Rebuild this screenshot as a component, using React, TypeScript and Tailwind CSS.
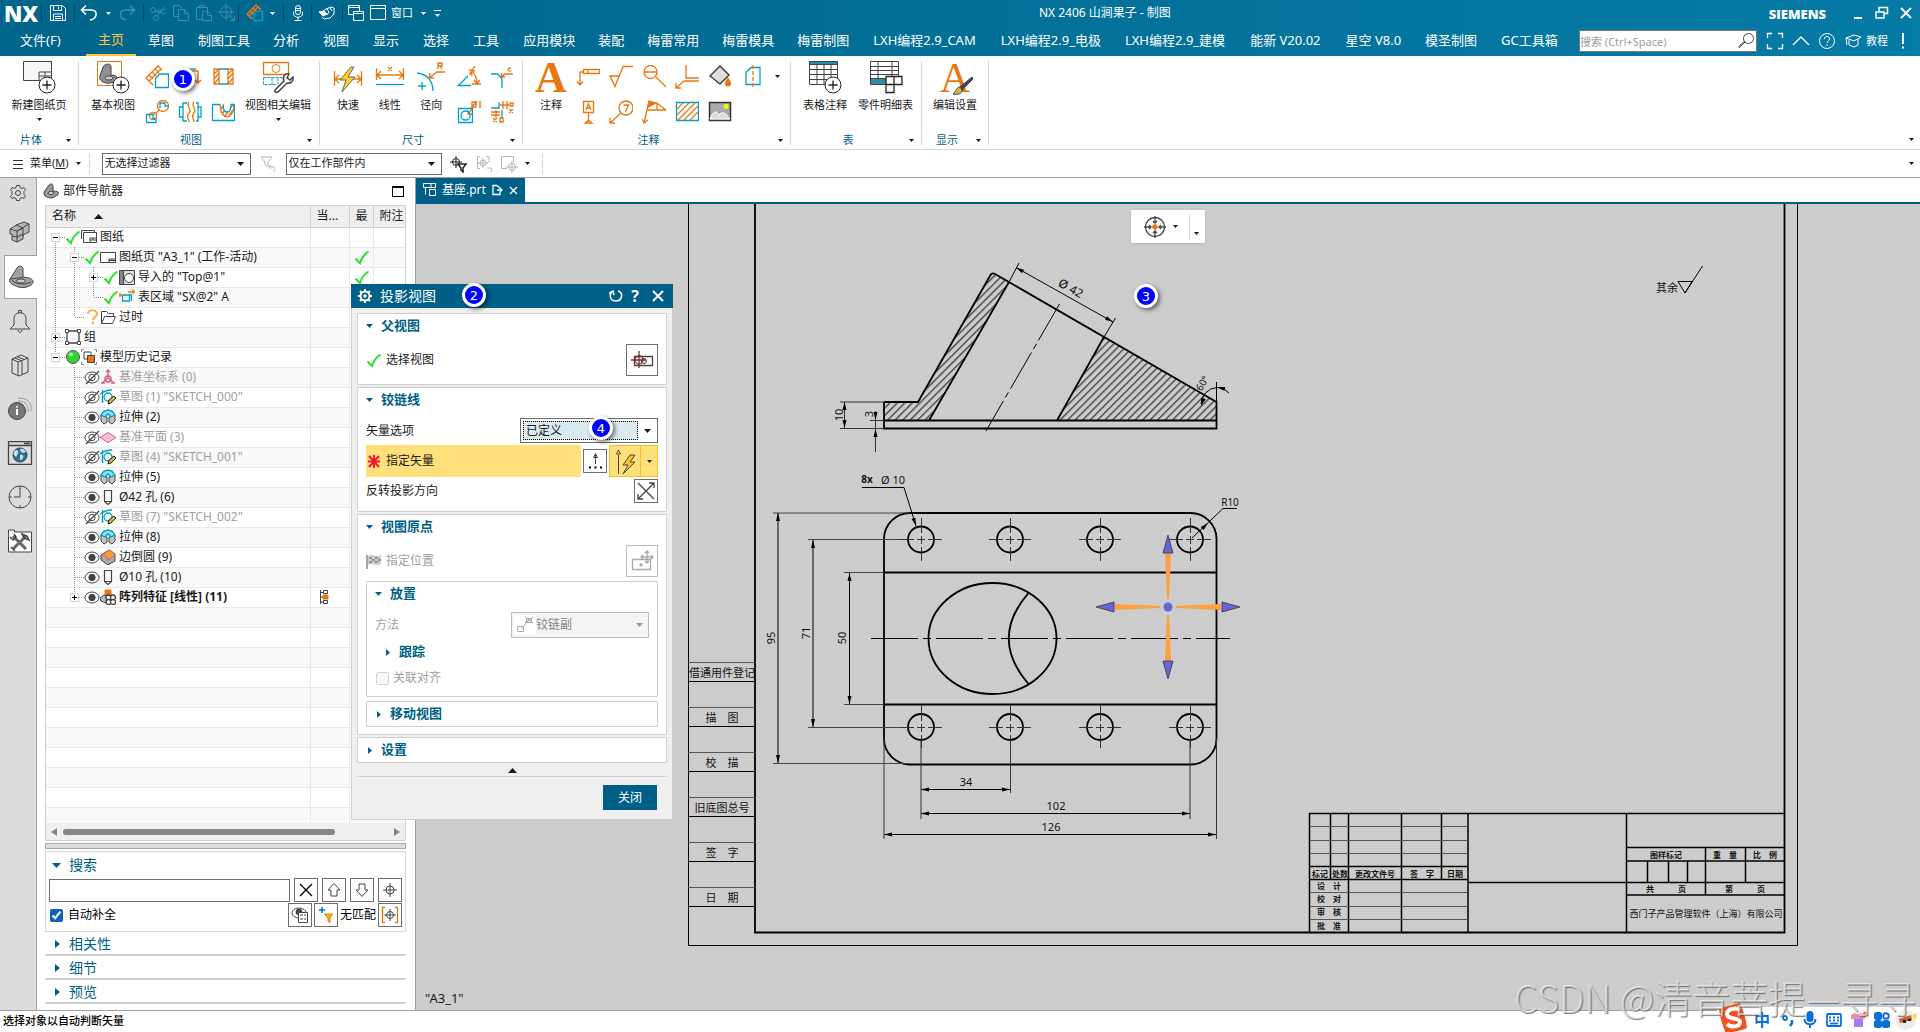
import React from 'react';
import type { ReactNode } from 'react';

const O = '#e8770f';
const C = '#00a0c8';
const K = '#444444';

type SvgProps = { w?: number; h?: number; className?: string; children: ReactNode; sw?: number; color?: string };

function Svg({ w = 24, h, className = '', children, sw = 1, color = K }: SvgProps) {
  const hh = h ?? w;
  return (
    <svg
      width={w}
      height={hh}
      viewBox={`0 0 ${w} ${hh}`}
      fill="none"
      stroke={color}
      strokeWidth={sw}
      className={`shrink-0 ${className}`}
      aria-hidden="true"
    >
      {children}
    </svg>
  );
}

function Caret({ color = '#1a1a1a', className = '' }: { color?: string; className?: string }) {
  return (
    <svg width="5" height="3" viewBox="0 0 5 3" className={`shrink-0 ${className}`} aria-hidden="true">
      <path d="M0 0h5L2.5 3z" fill={color} />
    </svg>
  );
}

function Check({ className = '' }: { className?: string }) {
  return (
    <Svg w={16} sw={2} color="#2be02b" className={className}>
      <path d="M1.5 9.5L6 14C7.5 9 10.5 5 14.5 2.5" />
    </Svg>
  );
}

function Marker({ n, className }: { n: number; className: string }) {
  return (
    <span
      className={`absolute z-30 flex h-6 w-6 items-center justify-center rounded-full border-[3px] border-white bg-[#0000ff] text-[13px] leading-none text-white shadow-[2px_2px_4px_rgba(0,0,0,0.55)] font-["DejaVu_Sans"] ${className}`}
    >
      {n}
    </span>
  );
}

/* ---------- Title bar and menu ---------- */

function BarSep() {
  return <span className="h-[18px] w-px shrink-0 bg-[#004a68]" />;
}

function QuickButton({ label, children, dim = false, className = 'w-[23px]' }: { label: string; children: ReactNode; dim?: boolean; className?: string }) {
  return (
    <button type="button" aria-label={label} className={`flex h-6 shrink-0 items-center justify-center ${dim ? 'opacity-25' : ''} ${className}`}>
      {children}
    </button>
  );
}

function TitleBar() {
  return (
    <div className="flex h-[26px] items-center">
      <span className="w-[41px] shrink-0 pl-1 font-['Open_Sans'] text-[22px] font-extrabold leading-[26px] text-white">NX</span>
      <BarSep />
      <QuickButton label="保存" className="w-8">
        <Svg w={18} color="#fff">
          <path d="M1.5 1.5h12l3 3v12h-15zM4.5 1.5v5h8v-5M4.5 16v-6h9v6M6 12.5h6M6 14.5h6M9.5 2.5v3" />
        </Svg>
      </QuickButton>
      <BarSep />
      <QuickButton label="撤销" className="w-7">
        <Svg w={18} color="#fff" sw={1.5}>
          <path d="M6 1.5L1.5 6 6 10.5M1.5 6H12c6 1 5.5 8.5-2 10" />
        </Svg>
      </QuickButton>
      <Caret color="#fff" className="ml-[3px]" />
      <QuickButton label="重做" dim className="w-8">
        <Svg w={18} color="#fff" sw={1.5}>
          <path d="M12 1.5L16.5 6 12 10.5M16.5 6H7C.5 7 1 14.5 8 16" />
        </Svg>
      </QuickButton>
      <BarSep />
      <QuickButton label="剪切" dim className="ml-[2px] w-[23px]">
        <Svg w={18} color="#fff">
          <circle cx="4" cy="6" r="2.5" />
          <circle cx="7" cy="14" r="2.5" />
          <path d="M6 7l11 3M8 12l7-9M6 8l11-3" />
        </Svg>
      </QuickButton>
      <QuickButton label="复制" dim>
        <Svg w={18} color="#fff">
          <path d="M6.5 5.5h6l4 4v7h-10zM12.5 5.5v4h4M6 12.5H1.5v-11h6l3 3" />
        </Svg>
      </QuickButton>
      <QuickButton label="粘贴" dim>
        <Svg w={18} color="#fff">
          <path d="M7 15.5H1.5v-12h11V7M4.5 3.5v-2h5v2M7.5 7.5h5l4 4v5h-9zM12.5 7.5v4h4" />
        </Svg>
      </QuickButton>
      <QuickButton label="定位" dim>
        <Svg w={18} color="#fff">
          <circle cx="8" cy="8" r="5.5" />
          <path d="M8 0v16M0 8h16M9.5 9.5l7 7M16.5 12v4.5H12" />
        </Svg>
      </QuickButton>
      <BarSep />
      <QuickButton label="投影视图" className="w-[31px]">
        <Svg w={18} color={O} sw={1.5}>
          <path d="M1 10L10 1l5 5M1 10l5 5M4 7l4 4M7 4l4 4M3 12L12 3" />
          <path d="M7.5 16.5V10.5L11 7.5h5.5v9z" stroke={C} fill="#00658b" />
        </Svg>
      </QuickButton>
      <Caret color="#fff" />
      <span className="w-2" />
      <BarSep />
      <QuickButton label="语音" className="w-[27px]">
        <Svg w={18} color="#fff">
          <rect x="6.5" y="1.5" width="5" height="9" rx="2.5" />
          <path d="M4.5 7.5v2c0 5 9 5 9 0v-2M9 13v3M5.5 16.5h7M7 4.5h4M7 6.5h4" />
        </Svg>
      </QuickButton>
      <BarSep />
      <QuickButton label="触控" className="w-[30px]">
        <Svg w={18} color="#fff">
          <path d="M4 8l4-3 5-2 3 1v6l-4 4-6 1-2-2M9 5l2 3-2 3M12 4l2 3" />
          <path d="M1 8l5-1 3 3-4 2z" fill="#fff" />
        </Svg>
      </QuickButton>
      <BarSep />
      <QuickButton label="切换窗口" className="w-[26px]">
        <Svg w={18} color="#fff">
          <path d="M1.5 1.5h11v9h-11zM1.5 3.5h11" />
          <path d="M6.5 7.5h10v9h-10zM6.5 9.5h10" fill="#00658b" />
        </Svg>
      </QuickButton>
      <button type="button" className="flex shrink-0 items-center gap-1 text-[11px] text-white">
        <Svg w={18} color="#fff">
          <path d="M1.5 1.5h15v14h-15zM1.5 4.5h15" />
        </Svg>
        窗口
        <Caret color="#fff" className="ml-1" />
      </button>
      <button type="button" aria-label="自定义" className="ml-2 flex flex-col items-center gap-[3px]">
        <span className="h-px w-[7px] bg-white" />
        <Caret color="#fff" />
      </button>
      <h1 className="flex-1 text-center text-xs text-white">NX 2406 山涧果子 - 制图</h1>
      <span className="mt-1 font-['Open_Sans'] text-[13px] font-extrabold text-white">SIEMENS</span>
      <div className="ml-[24px] flex items-center gap-[8px] pr-[6px] text-white">
        <button type="button" aria-label="最小化">
          <Svg w={16} color="#fff" sw={2}><path d="M4 13h8" /></Svg>
        </button>
        <button type="button" aria-label="还原">
          <Svg w={16} color="#fff" sw={1.5}><path d="M5 6V2.5h8.5v6H10M2 7h8v6H2z" /></Svg>
        </button>
        <button type="button" aria-label="关闭窗口">
          <Svg w={16} color="#fff" sw={1.8}><path d="M3 3l10 10M13 3L3 13" /></Svg>
        </button>
      </div>
    </div>
  );
}

const PAIR = 'px-3';
const QUAD = 'pl-3 pr-[11px]';
const MIXED = 'px-[13px]';
const MENUS: [string, string][] = [
  ['草图', PAIR],
  ['制图工具', QUAD],
  ['分析', PAIR],
  ['视图', PAIR],
  ['显示', PAIR],
  ['选择', PAIR],
  ['工具', PAIR],
  ['应用模块', QUAD],
  ['装配', QUAD],
  ['梅雷常用', QUAD],
  ['梅雷模具', QUAD],
  ['梅雷制图', QUAD],
  ['LXH编程2.9_CAM', MIXED],
  ['LXH编程2.9_电极', PAIR],
  ['LXH编程2.9_建模', PAIR],
  ['能新 V20.02', MIXED],
  ['星空 V8.0', PAIR],
  ['模圣制图', PAIR],
  ['GC工具箱', PAIR],
];

function MenuBar() {
  return (
    <div className="flex h-[30px] items-center text-[13px] text-white">
      <nav className="flex h-full items-center whitespace-nowrap">
        <button type="button" className="w-[86px] pl-5 text-left">文件(F)</button>
        <button type="button" className="flex h-full items-center border-b-2 border-[#ffc53d] px-3 text-[#ffc53d]">主页</button>
        {MENUS.map(([m, pad]) => (
          <button type="button" key={m} className={pad}>{m}</button>
        ))}
      </nav>
      <div className="ml-auto flex h-[22px] w-[178px] shrink-0 items-center border border-[#777] bg-white">
        <input aria-label="搜索" placeholder="搜索 (Ctrl+Space)" className="h-full w-full bg-white text-[11px] text-black outline-none placeholder:text-[#a0a0a0]" />
        <Svg w={18} className="mr-px">
          <circle cx="11.5" cy="6.5" r="5" />
          <path d="M8 10l-6 6M7.5 9l-6 6" />
        </Svg>
      </div>
      <div className="flex shrink-0 items-center gap-2 pl-[9px] pr-[10px]">
        <button type="button" aria-label="全屏">
          <Svg w={18} color="#fff" sw={1.3}><path d="M1.5 6V1.5H6M12 1.5h4.5V6M16.5 12v4.5H12M6 16.5H1.5V12" /></Svg>
        </button>
        <button type="button" aria-label="折叠功能区">
          <Svg w={18} color="#fff" sw={1.3}><path d="M1 13l8-8 8 8" /></Svg>
        </button>
        <button type="button" aria-label="帮助">
          <Svg w={18} color="#fff">
            <circle cx="9" cy="9" r="7.500" />
            <path d="M6.500 7c0-3.500 5-3.500 5 0 0 2-2.500 2-2.500 4M9 12.500v1.500" />
          </Svg>
        </button>
        <button type="button" className="flex items-center gap-1 text-[11px]">
          <Svg w={18} color="#fff">
            <path d="M2 6l8-3 7 2-7 4zM5 8v5l5 2 4-2V7M2 6l1 7" />
          </Svg>
          教程
        </button>
        <button type="button" aria-label="提醒" className="ml-1 mr-1">
          <Svg w={6} h={18} color="#fff" sw={2}><path d="M3 1v11M3 14.500v2" /></Svg>
        </button>
      </div>
    </div>
  );
}

/* ---------- Ribbon ---------- */

function Group({ label, width, children }: { label: string; width: string; children: ReactNode }) {
  return (
    <section aria-label={label} className={`flex shrink-0 ${width}`}>
      <div className="flex min-w-0 flex-1 flex-col">
        <div className="flex flex-1 justify-between px-2">{children}</div>
        <div className="flex h-[18px] items-center pr-[7px] text-[11px] text-[#005f87]">
          <span className="flex-1 pr-1 text-center">{label}</span>
          <Caret />
        </div>
      </div>
      <span className="mb-1 w-px bg-[#d8d8d8]" />
    </section>
  );
}

function Big({ label, caret = false, children }: { label: string; caret?: boolean; children: ReactNode }) {
  return (
    <button type="button" className="flex flex-col items-center whitespace-nowrap text-[11px] leading-[14px] text-[#1a1a1a]">
      <span className="mb-[3px] flex h-[34px] items-center">{children}</span>
      {label}
      {caret && <Caret className="mt-[6px]" />}
    </button>
  );
}

function SmallGrid({ cols, items }: { cols: string; items: [string, ReactNode][] }) {
  return (
    <div className={`grid content-start gap-x-[9px] gap-y-[11px] pt-1 ${cols}`}>
      {items.map(([name, el]) => (
        <button type="button" key={name} aria-label={name}>{el}</button>
      ))}
    </div>
  );
}

const Plus = ({ x, y }: { x: number; y: number }) => (
  <>
    <circle cx={x} cy={y} r="8" fill="#fff" stroke="#222" />
    <path d={`M${x - 4.5} ${y}h9M${x} ${y - 4.5}v9`} stroke="#222" strokeWidth="1.3" />
  </>
);

const VIEW_ICONS: [string, ReactNode][] = [
  ['投影', <Svg color={O} sw={1.3}><path d="M1 13L13 1l4 4M1 13l7 7M4 16L16 4M4 10l4 4M7 7l4 4M10 4l4 4" /><path d="M10.5 22.500v-9l4-4.500h9v13.500z" stroke={C} fill="#fff" /></Svg>],
  ['局部放大', <Svg color={O} sw={1.3}><path d="M12 6h8v12M17 15l3 3 3-3" /><path d="M12 4h6" stroke={C} /></Svg>],
  ['剖视图', <Svg color={O} sw={1.3}><path d="M3 4h5v15H3zM17 4h5v15h-5zM3 9l5-5M3 14l5-6M3 19l5-6M17 9l5-5M17 14l5-6M17 19l5-6" /><path d="M8 4h9M8 19h9" stroke={C} /></Svg>],
  ['局部', <Svg color={O} sw={1.3}><circle cx="18" cy="6" r="5.5" /><circle cx="8" cy="16" r="3.5" /><path d="M10.5 13.5l4-4" /><path d="M15 8V3h5v3h3M9.5 14.5H1.5v8h9.5v-4h-3v-3" stroke={C} /></Svg>],
  ['断开', <Svg color={O} sw={1.3}><path d="M11 2c-4 4 4 7 0 11s1 7 0 9M16 2c-4 4 4 7 0 11s1 7 0 9" /><path d="M9 3H5v18h4M5 7H1.5v10H5M18 3h2v18h-2M20 7h3v10h-3" stroke={C} /></Svg>],
  ['局部剖', <Svg color={O} sw={1.3}><path d="M9 4c0 17 14 17 14 1M9 10l4-5M11 14l3-4M14 16l3-4M18 15l4-5M19 8l4-4" /><path d="M9 4.5H1.5v16h22v-16H20c0 10-8 10-8 0" stroke={C} /></Svg>],
];

const DIM_ICONS: [string, ReactNode][] = [
  ['角度', <Svg color={O} sw={1.3}><path d="M18 1l-6 9M14 6c5 3 6 8 6 13M12 5l6 1M14 6l1 5M17 15l3 4 3-4M15 19h9" /><path d="M11 11L1.5 20.5H14" stroke={C} /></Svg>],
  ['倒斜角', <Svg color={O} sw={1.3}><path d="M23 9h-8l-4 3M12 8l-1 4h4M21 3c-4-1-4 4 0 3" /><path d="M1 9h7l4 5v9" stroke={C} /></Svg>],
  ['孔', <Svg color={O} sw={1.3}><path d="M16 8l-5 6M11 10v4h4M15 2h4v5h-4zM14 8l6-7M22 2h3M22 7h3M23 2v5" /><path d="M1.500 8.500h14v14h-14z" stroke={C} /><circle cx="8.500" cy="15.500" r="4.500" stroke={C} /></Svg>],
  ['坐标', <Svg color={O} sw={1.3}><path d="M13 1v8M17 1v8M10 5h9M1 12h9M1 15h9M6 10v8M20 3h3v3h-3zM19 9l4 4M23 9l-4 4M3 18l4 4M7 18l-4 4M10 18h3v4h-3z" /><path d="M1 8h8V2M12 10v8" stroke={C} /></Svg>],
];

const NOTE_ICONS: [string, ReactNode][] = [
  ['特征控制框', <Svg color={O} sw={1.3}><path d="M4 7v13M1 16.5L4 20l3-3.5M4 7h4M7.5 4.500h16v4h-16zM12 4.500v4" /></Svg>],
  ['表面粗糙度', <Svg color={O} sw={1.3}><path d="M1 11h9L6 21.500zM6 21.500L14 1.500h10" /></Svg>],
  ['目标点', <Svg color={O} sw={1.3}><circle cx="8.500" cy="7" r="6.500" /><path d="M2 7h13M14 12l10 10" /></Svg>],
  ['相交', <Svg color={O} sw={1.3}><path d="M11 0v13h13M9 16h15M9 16l-8 7M1 18v5h5" /></Svg>],
  ['填充', <Svg color={K}><path d="M2 11L12 1l9 9-9 9z" fill="#ddd" strokeWidth="1.500" /><path d="M8 5l4-4 3 3" /><path d="M20 13c-4 6-3 8 0 8s4-2 0-8z" fill={O} stroke={O} /></Svg>],
  ['中心线', <Svg color={C} sw={1.3}><path d="M5 19.500V7.500l5-5h9v17z" /><path d="M12 0v23" stroke={O} strokeDasharray="4 2" /></Svg>],
  ['基准', <Svg color={O} sw={1.3}><path d="M7.500 1.500h10v11h-10zM12.500 13v9M9 23h7l-3.500-3z" /><path d="M10 10l2.500-6 2.500 6M11 8h3" /></Svg>],
  ['符号标注', <Svg color={O} sw={1.3}><circle cx="17" cy="8" r="7" /><path d="M12 13L1 23M1 18v5h5M14.500 5h5l-3 7" /></Svg>],
  ['焊接符号', <Svg color={O} sw={1.3}><path d="M5 10L2 23M0 19l2 4 4-3M5 10h19L15 3v7M5 10L7 1" /><path d="M7 1l7 2-8 4z" fill={O} /></Svg>],
  ['剖面线', <Svg color={O} sw={1.3}><path d="M2 9l6-6M2 15L14 3M3 20L20 3M9 20L23 6M15 20l8-8" /><path d="M1.500 2.500h22v18h-22z" stroke={C} /></Svg>],
  ['图像', <Svg color="#333"><path d="M1.500 2.500h21v18h-21z" fill="#a9a9a9" strokeWidth="1.500" /><circle cx="18" cy="6.500" r="2.500" fill="#ff0" stroke="none" /><path d="M2 19c3-8 6-9 9-4 3-4 6-3 11 4z" fill="#ddd" stroke="#fff" /></Svg>],
];

function Ribbon() {
  return (
    <div className="flex h-[94px] border-b border-[#d8d8d8] bg-white pt-[5px]">
      <Group label="片体" width="w-[79px]">
        <div className="flex w-full justify-center">
          <Big label="新建图纸页" caret>
            <Svg w={34}><path d="M1.5.5h28v19h-28z" fill="#f6f6f6" /><path d="M17 19v-8h12M17 15h12M23 11v4" /><Plus x={25} y={24} /></Svg>
          </Big>
        </div>
      </Group>
      <Group label="视图" width="w-[241px]">
        <div className="flex w-full justify-between pl-1">
          <Big label="基本视图">
            <Svg w={34}><path d="M1.5.5h24v24h-24z" stroke={O} /><path d="M4 15l3-9c2-4 9-4 8 1v7c9 0 8 7-1 8-6 1-12-3-10-7z" fill="#8f8f8f" /><ellipse cx="13" cy="17" rx="4" ry="2" fill="#ccc" /><Plus x={25} y={24} /></Svg>
          </Big>
          <SmallGrid cols="grid-cols-3" items={VIEW_ICONS} />
          <Big label="视图相关编辑" caret>
            <Svg w={34}><path d="M2.5 1.5h25v12h-25z" stroke={O} strokeWidth="1.300" /><circle cx="15" cy="7.5" r="4" stroke={O} /><path d="M2.5 16.5h25M2.5 16.5v7h14M11 17v6M17 17v6" stroke={C} strokeDasharray="3 1" /><path d="M14 29l9-9c-2-4 1-8 5-7l-2 4 3 2 3-3c1 4-3 7-6 6l-9 9c-3 1-4-1-3-2z" fill="#fff" strokeWidth="1.500" /></Svg>
          </Big>
        </div>
      </Group>
      <Group label="尺寸" width="w-[203px]">
        <div className="flex w-full justify-between pl-1">
          <Big label="快速"><Svg w={32} color={O}><path d="M2.5 9v15M29.5 9v15M3 17h26M7 13l-4 4 4 4M25 13l4 4-4 4" strokeWidth="1.300" /><path d="M19 5L8 18h6l-4 12 13-15h-7l6-10z" fill="#ffcf25" stroke="#666" /></Svg></Big>
          <Big label="线性"><Svg w={32} color={O} sw={1.3}><path d="M2.5 6v12M29.5 6v12M3 13h26M7 9l-4 4 4 4M25 9l4 4-4 4M14 5l4 4M18 5l-4 4" /><path d="M2 22.5h28" stroke={C} /></Svg></Big>
          <Big label="径向"><Svg w={32} color={O} sw={1.3}><path d="M30 10h-8l-8 6M15 11l-1 5h5M23 7V1h4v3h-4M25 4l2 3" /><path d="M2 11c10 1 16 8 16 18M3 24h8M7 20v8" stroke={C} /></Svg></Big>
          <SmallGrid cols="grid-cols-2" items={DIM_ICONS} />
        </div>
      </Group>
      <Group label="注释" width="w-[268px]">
        <div className="flex w-full justify-between pl-1 pr-[2px]">
          <Big label="注释">
            <span className="font-['Liberation_Serif'] text-[44px] font-bold leading-9 text-[#e8770f]">A</span>
          </Big>
          <SmallGrid cols="grid-cols-6" items={NOTE_ICONS} />
          <Caret className="mt-[14px]" />
        </div>
      </Group>
      <Group label="表" width="w-[131px]">
        <div className="flex w-full justify-between pl-1">
          <Big label="表格注释">
            <Svg w={34}><path d="M1.5.5h28v23h-28zM1.5 8.500h28M1.5 13.500h28M1.5 18.500h28M9 4v19M16 4v19M23 4v19" /><path d="M1.500.5h28v3h-28z" fill="#2a8bab" /><Plus x={25} y={24} /></Svg>
          </Big>
          <Big label="零件明细表">
            <Svg w={34}><path d="M1.5.5h28v23h-28zM1.5 5.500h28M1.5 9.500h28M1.5 13.500h28M9 0v17M23 0v16" /><path d="M1.5 17.500h18v6h-18z" fill="#2a8bab" /><path d="M17 15.500h16v8H17zM17 23.500h8v8h-8zM25 15v8" fill="#fff" stroke="#222" strokeWidth="1.300" /></Svg>
          </Big>
        </div>
      </Group>
      <Group label="显示" width="w-[67px]">
        <div className="flex w-full justify-center">
          <Big label="编辑设置">
            <span className="relative font-['Liberation_Serif'] text-[42px] leading-9 text-[#e8770f]">
              A
              <Svg w={22} className="absolute bottom-0 left-3"><path d="M20 3L8 13l2 3L21 5z" fill="#444" /><path d="M8 13c-4 0-3 4-7 7 5 1 9 0 9-4z" fill="#d9b340" /></Svg>
            </span>
          </Big>
        </div>
      </Group>
      <button type="button" aria-label="功能区选项" className="ml-auto self-end pb-[8px] pr-[6px]"><Caret /></button>
    </div>
  );
}

function BoxSelect({ label, value, className, selectClass }: { label: string; value: string; className: string; selectClass: string }) {
  return (
    <span className={`relative flex items-center border border-[#6e6e6e] bg-white ${className}`}>
      <select aria-label={label} defaultValue={value} className={`h-full appearance-none outline-none ${selectClass}`}>
        <option>{value}</option>
      </select>
      <svg width="7" height="4" viewBox="0 0 7 4" className="pointer-events-none absolute right-[6px]" aria-hidden="true">
        <path d="M0 0h7L3.500 4z" fill="currentColor" />
      </svg>
    </span>
  );
}

function SelectionBar() {
  return (
    <div className="flex h-[28px] items-center border-b border-[#a0a0a0] bg-white text-[11px] text-[#1a1a1a]">
      <button type="button" className="flex items-center pl-3">
        <Svg w={12} className="mr-[6px]" color="#333"><path d="M1 2.500h10M1 6.500h10M1 10.500h10" /></Svg>
        菜单(<u>M</u>)
        <Caret className="ml-[7px]" />
      </button>
      <span className="ml-[8px] h-5 w-px bg-[#d8d8d8]" />
      <BoxSelect label="选择过滤器" value="无选择过滤器" className="ml-3 h-[22px] w-[149px]" selectClass="w-full pl-[2px] bg-transparent" />
      <Svg w={18} className="ml-2" color="#b5b5b5"><path d="M2 2h11l-4 5v5l-3-2V7zM11 12h4c2 2 1 4-1 4M12 10l-2 2 2 2" /></Svg>
      <BoxSelect label="选择范围" value="仅在工作部件内" className="ml-[9px] h-[22px] w-[156px]" selectClass="w-full pl-[2px] bg-transparent" />
      <Svg w={18} className="ml-2" color="#222"><circle cx="6" cy="7" r="3.500" /><path d="M6 1v12M0 7h12" /><path d="M8 9h8l-3 4v4l-2-2v-2z" fill="#fff" strokeWidth="1.500" /></Svg>
      <Svg w={18} className="ml-2" color="#b5b5b5"><path d="M4 1.500H1.500v12H4M10 1.500h3v6" /><circle cx="7" cy="8" r="3" /><path d="M7 3v10M2 8h10M11 13h4c1 1 1 3 0 4" /></Svg>
      <Svg w={18} className="ml-[6px]" color="#b5b5b5"><path d="M7 13.500H1.500v-12h12V7" /><circle cx="12" cy="12" r="3.500" /><path d="M12 6v12M6 12h12" /></Svg>
      <Caret className="ml-[7px]" />
      <span className="ml-3 h-5 w-px bg-[#d8d8d8]" />
      <button type="button" aria-label="选择条选项" className="ml-auto pr-[6px]"><Caret /></button>
    </div>
  );
}

/* ---------- Resource strip ---------- */

const STRIP: [string, ReactNode][] = [
  ['设置', <Svg w={18} className="mb-1 mr-1"><circle cx="9" cy="9" r="2.500" /><path d="M7.500 1.500h3l.5 2 2 1 2-1 1.500 2-1.500 2v3l1.500 2-1.500 2-2-1-2 1-.5 2h-3l-.5-2-2-1-2 1-1.500-2 1.500-2v-3l-1.500-2 1.500-2 2 1 2-1z" /></Svg>],
  ['装配导航器', <Svg w={22} h={24}><path d="M1 8l5-3 1-1 8-3 5 2v8l-6 3v4l-6 3-5-2v-6H1z" fill="#b5b5b5" /><path d="M1 8l7 2 12-7M8 10v11M3 15l5 1 6-3M14 7v8M7 4l7 3M8 10l6-3" /></Svg>],
  ['部件导航器', <Svg w={26} h={24}><path d="M2 14L9 3c2-3 6-2 6 1v8c11 1 12 5 8 8-6 4-13 3-19-1-2-1-3-3-2-5z" fill="#a2a2a2" /><path d="M2 14c2 0 9-1 13-2M4 15c4 5 14 5 19 2" /><ellipse cx="13" cy="16" rx="4.500" ry="2" fill="#ccc" /></Svg>],
  ['通知', <Svg w={22} h={24}><path d="M9.500 4V1.500h3V4M5 16V9c0-7 12-7 12 0v7l4 4H1zM9 21c0 3 4 3 4 0" /></Svg>],
  ['重用库', <Svg w={20} h={24}><path d="M2 6l9-4 7 3v14l-9 4-7-3zM2 6l6 3v14M8 9l10-4M5 5l7 3v13M8 4l6 2.500" /></Svg>],
  ['HD3D', <Svg w={26} h={24}><circle cx="10" cy="14" r="8.500" fill="#777" /><path d="M11 4c8 0 11 5 10 11M11 1c11 0 14 6 13 13" stroke="#999" /><path d="M10 12v6M10 9v1.500" stroke="#fff" strokeWidth="2" /></Svg>],
  ['浏览器', <Svg w={26} h={24}><path d="M1.500.5h23v23h-23zM1.500 4.500h23M17 2.500h6" strokeWidth="1.300" /><circle cx="13" cy="14" r="7" fill="#2d7390" stroke="#245" /><path d="M7 11c2-4 5-1 4 1s-1 5-3 3c-1-1-2-2-1-4zM13 8c3-1 5 1 6 3l-3 1c-2-1-3-2-3-4zM13 14c3-1 4 1 3 3s-3 3-3 1z" fill="#cde" stroke="none" /></Svg>],
  ['历史记录', <Svg w={24}><circle cx="12" cy="12" r="11" /><path d="M12 3v9H6M12 20v3M1 12h3M20 12h3M12 1v3" /></Svg>],
  ['角色', <Svg w={26} h={24}><path d="M1.500 3V1h6v2h17v20h-23z" fill="#fff" /><path d="M6 20L19 7M6 7l13 13" strokeWidth="3" stroke="#666" /><path d="M15 5l5 2 2 4-5-2zM3 8l3 3 3-3-2-3M4 18l4 4" strokeWidth="1.500" /></Svg>],
];

function ResourceStrip() {
  return (
    <nav aria-label="资源条" className="flex w-[37px] shrink-0 flex-col items-end border-r border-[#a0a0a0] bg-[#dcdcdc]">
      {STRIP.map(([name, el], i) => (
        <button
          type="button"
          key={name}
          aria-label={name}
          className={`flex w-[33px] items-center justify-center ${i === 0 ? 'h-[33px]' : 'h-[44px]'} ${i === 2 ? 'relative left-px border border-r-0 border-[#a0a0a0] bg-white' : ''}`}
        >
          {el}
        </button>
      ))}
    </nav>
  );
}

/* ---------- Part navigator ---------- */

type Kind = 'sheets' | 'sheet' | 'view' | 'region' | 'folder' | 'group' | 'history' | 'csys' | 'sketch' | 'extrude' | 'hole' | 'plane' | 'blend' | 'pattern';
type Mark = 'check' | 'question' | 'ball' | 'eye' | 'hidden' | 'none';
type Row = { slots: string[]; mark: Mark; kind: Kind; text: string; dim?: boolean; bold?: boolean; latest?: boolean; flag?: boolean };

const ROWS: Row[] = [
  { slots: ['dh-'], mark: 'check', kind: 'sheets', text: '图纸' },
  { slots: ['ud', 'udh-'], mark: 'check', kind: 'sheet', text: '图纸页 "A3_1" (工作-活动)', latest: true },
  { slots: ['ud', 'ud', 'udh+'], mark: 'check', kind: 'view', text: '导入的 "Top@1"', latest: true },
  { slots: ['ud', 'ud', 'uh'], mark: 'check', kind: 'region', text: '表区域 "SX@2" A' },
  { slots: ['ud', 'uh'], mark: 'question', kind: 'folder', text: '过时' },
  { slots: ['udh+'], mark: 'none', kind: 'group', text: '组' },
  { slots: ['uh-'], mark: 'ball', kind: 'history', text: '模型历史记录' },
  { slots: ['', 'udh'], mark: 'hidden', kind: 'csys', text: '基准坐标系 (0)', dim: true },
  { slots: ['', 'udh'], mark: 'hidden', kind: 'sketch', text: '草图 (1) "SKETCH_000"', dim: true },
  { slots: ['', 'udh'], mark: 'eye', kind: 'extrude', text: '拉伸 (2)' },
  { slots: ['', 'udh'], mark: 'hidden', kind: 'plane', text: '基准平面 (3)', dim: true },
  { slots: ['', 'udh'], mark: 'hidden', kind: 'sketch', text: '草图 (4) "SKETCH_001"', dim: true },
  { slots: ['', 'udh'], mark: 'eye', kind: 'extrude', text: '拉伸 (5)' },
  { slots: ['', 'udh'], mark: 'eye', kind: 'hole', text: 'Ø42 孔 (6)' },
  { slots: ['', 'udh'], mark: 'hidden', kind: 'sketch', text: '草图 (7) "SKETCH_002"', dim: true },
  { slots: ['', 'udh'], mark: 'eye', kind: 'extrude', text: '拉伸 (8)' },
  { slots: ['', 'udh'], mark: 'eye', kind: 'blend', text: '边倒圆 (9)' },
  { slots: ['', 'udh'], mark: 'eye', kind: 'hole', text: 'Ø10 孔 (10)' },
  { slots: ['', 'uh+'], mark: 'eye', kind: 'pattern', text: '阵列特征 [线性] (11)', bold: true, flag: true },
];

function Slot({ s }: { s: string }) {
  return (
    <Svg w={19} h={20} color="#909090">
      {s.includes('u') && <path d="M9.500 0v10" strokeDasharray="1 1" />}
      {s.includes('d') && <path d="M9.500 10v10" strokeDasharray="1 1" />}
      {s.includes('h') && <path d="M10 10.500h9" strokeDasharray="1 1" />}
      {(s.includes('-') || s.includes('+')) && (
        <>
          <path d="M5.500 6.500h8v8h-8z" fill="#fff" stroke="#d0d0d0" />
          <path d="M7 10.500h5" stroke="#000" />
        </>
      )}
      {s.includes('+') && <path d="M9.500 8v5" stroke="#000" />}
    </Svg>
  );
}

function MarkIcon({ m }: { m: Mark }) {
  if (m === 'none') return null;
  if (m === 'check') return <Check />;
  if (m === 'question') return <Svg w={16} color="#ffab40" sw={2}><path d="M4 5c0-5 9-5 9 0 0 3-4 3-4 6M9 12.500v2.500" /></Svg>;
  if (m === 'ball') return <Svg w={16}><circle cx="8" cy="8" r="6.500" fill="#30d530" stroke="#555" /><circle cx="6" cy="5.500" r="2" fill="#a5f7a5" stroke="none" /></Svg>;
  return (
    <Svg w={16}>
      <ellipse cx="8" cy="8.500" rx="7" ry="5.500" />
      <circle cx="8" cy="8.500" r="3.200" fill={m === 'eye' ? K : 'none'} />
      {m === 'hidden' && <path d="M2 15L15 2" strokeWidth="1.300" />}
    </Svg>
  );
}

function KindIcon({ k }: { k: Kind }) {
  const art: Record<Kind, ReactNode> = {
    sheets: <><path d="M.5 10V1.500h13V3" /><path d="M2.500 3.500h13v10h-13zM9 13v-4h6M9 11h6M12 9v2" fill="#fff" /></>,
    sheet: <path d="M.5 3.500h15v10H.5zM9 13v-3h6M12 10v2M9 11.500h6" fill="#fff" />,
    view: <><path d="M.5 1.500h15v14H.5z" fill="#ddd" /><path d="M.5 1.500h4v14h-4z" fill="#888" /><circle cx="10" cy="9" r="4.500" fill="#fff" /></>,
    region: <g strokeWidth="1.300"><path d="M0 6h3M9 3h7M14 0v5M1 4v4" stroke={O} /><path d="M3.500 6v6h7V5M3.500 6h9v6" stroke={C} /></g>,
    folder: <path d="M1.500 14.500V2.500h5l2 2h5v3M1.500 14.500l3-7h11l-3 7z" />,
    group: <><path d="M2 2h12v12H2z" strokeWidth="1.300" /><path d="M.5.5h3v3h-3zM12.500.5h3v3h-3zM.5 12.500h3v3h-3zM12.500 12.500h3v3h-3z" fill="#fff" /></>,
    history: <><path d="M.5 3V.5H3M13 .5h2.500V3M15.500 13v2.500H13M3 15.500H.5V13" stroke="#888" /><path d="M3 3h7v7H3z" fill="#fff" /><path d="M6.500 6.500h7v7h-7z" fill={O} /></>,
    csys: <g stroke="#d4608c" strokeWidth="1.500"><path d="M8 1v8M8 9l-6 5M8 9l6 5M6 3l2-2 2 2" /><circle cx="8" cy="10" r="3" /><path d="M1 14h4M11 14h4" /></g>,
    sketch: <><path d="M2.500 1v13M0 5c4-3 7-4 12-4M3 13l-1-3" stroke={C} strokeWidth="1.300" /><circle cx="8" cy="8" r="4" stroke={C} strokeWidth="1.300" /><path d="M8 15l1-4 5-4 2 2-5 5z" fill="#d9b340" stroke="#222" /></>,
    extrude: <><path d="M1 6v6l3 3 3-2V8zM15 6v6l-3 3-3-2V8z" fill="#c4c4c4" /><path d="M1 6l3-4 4-1 4 1 3 4-4 2-3-3-3 3z" fill="#8edcf0" stroke={C} strokeWidth="1.300" /></>,
    hole: <path d="M4.500 1.500h7v11l-3.500 3-3.500-3zM4.500 12.500h7" strokeWidth="1.200" />,
    plane: <path d="M0 8.500l8-5 8 5-8 5z" fill="#f9bdd3" stroke="#d4608c" />,
    blend: <><path d="M1 6l8-5 6 4v7l-7 4-7-5z" fill="#aaa" /><path d="M1 6c4 0 6 2 7 5l7-5c-1-3-4-4-6-5z" fill="#f79a3c" stroke="#b65" /></>,
    pattern: <><path d="M5 1h6v6H5z" fill={O} stroke={O} /><path d="M0 9l4-3 5 2-3 6-5-2z" fill="#bbb" /><g strokeWidth="1.300" fill="#fff"><circle cx="8.500" cy="8.500" r="2.500" /><circle cx="13" cy="8.500" r="2.500" /><circle cx="8.500" cy="13" r="2.500" /><circle cx="13" cy="13" r="2.500" /></g></>,
  };
  return <Svg w={16}>{art[k]}</Svg>;
}

function TreeTable() {
  const blanks = Array.from({ length: 11 });
  const cell = 'border-r border-b border-[#e9e9e9] p-0';
  return (
    <table className="w-full table-fixed border-collapse text-xs text-[#1a1a1a]">
      <colgroup>
        <col />
        <col className="w-[39px]" />
        <col className="w-6" />
        <col className="w-8" />
      </colgroup>
      <thead>
        <tr className="h-[21px] bg-[#efefef] text-left">
          <th className="border-r border-b border-[#d0d0d0] p-0 pl-[6px] font-normal">
            <span className="flex items-center gap-[18px]">
              名称
              <svg width="9" height="5" viewBox="0 0 9 5" aria-hidden="true"><path d="M0 5h9L4.500 0z" fill="#1a1a1a" /></svg>
            </span>
          </th>
          <th className="border-r border-b border-[#d0d0d0] p-0 pl-[6px] font-normal">当...</th>
          <th className="border-r border-b border-[#d0d0d0] p-0 pl-[6px] font-normal">最</th>
          <th className="overflow-hidden whitespace-nowrap border-b border-[#d0d0d0] p-0 pl-[6px] font-normal">附注</th>
        </tr>
      </thead>
      <tbody>
        {ROWS.map((r) => (
          <tr key={r.text} className="h-5 even:bg-[#f9f9f9]">
            <td className={cell}>
              <div className={`-my-px flex h-5 items-center whitespace-nowrap ${r.dim ? 'text-[#a0a0a0]' : ''} ${r.bold ? 'font-bold' : ''}`}>
                {r.slots.map((s, i) => <Slot key={i} s={s} />)}
                <MarkIcon m={r.mark} />
                <KindIcon k={r.kind} />
                <span className="pl-[3px]">{r.text}</span>
              </div>
            </td>
            <td className={cell}>
              {r.flag && <Svg w={10} h={16} className="ml-2"><path d="M1.500 1v14M1.500 3.500h3M1.500 8h3M1.500 13h3M4.500 1.500h4v3h-4zM4.500 11.500h4v3h-4z" /><path d="M4 6h5v4H4z" fill={O} stroke={O} /></Svg>}
            </td>
            <td className={cell}>{r.latest && <Check className="ml-1" />}</td>
            <td className="border-b border-[#e9e9e9] p-0" />
          </tr>
        ))}
        {blanks.map((_, i) => (
          <tr key={i} className="h-5 even:bg-[#f9f9f9]">
            <td className={cell} /><td className={cell} /><td className={cell} /><td className="border-b border-[#e9e9e9] p-0" />
          </tr>
        ))}
      </tbody>
    </table>
  );
}

function ToolBtn({ label, children }: { label: string; children: ReactNode }) {
  return (
    <button type="button" aria-label={label} className="flex h-6 w-6 shrink-0 items-center justify-center border border-[#6e6e6e] bg-white">
      {children}
    </button>
  );
}

function Navigator() {
  return (
    <aside className="flex w-[379px] shrink-0 flex-col border-r border-[#a0a0a0] bg-white pl-2 pr-[9px]">
      <div className="flex h-[27px] items-center pb-px text-xs text-[#1a1a1a]">
        <Svg w={16} className="-ml-[2px] mr-1"><path d="M1 9L6 2c2-2 4-1 4 1v5c7 0 7 3 3 5-4 3-8 2-11 0-1-1-1-3-1-4z" fill="#999" /><ellipse cx="8" cy="10" rx="3" ry="1.500" fill="#ddd" /></Svg>
        <h2>部件导航器</h2>
        <button type="button" aria-label="最大化面板" className="ml-auto mr-[2px] h-[11px] w-3 border border-t-2 border-black" />
      </div>
      <div className="flex min-h-0 flex-1 flex-col border border-[#d0d0d0]">
        <div className="min-h-0 flex-1 overflow-hidden"><TreeTable /></div>
        <div className="flex h-[17px] items-center bg-[#efefef] px-[5px]">
          <Svg w={6} h={8} color="none"><path d="M6 0v8L0 4z" fill="#858585" /></Svg>
          <span className="ml-[6px] h-[6px] w-[272px] rounded-full bg-[#858585]" />
          <Svg w={6} h={8} color="none" className="ml-auto"><path d="M0 0v8l6-4z" fill="#858585" /></Svg>
        </div>
      </div>
      <div className="my-[2px] h-[6px] shrink-0 border border-[#a8a8a8] bg-[#dcdcdc]" />
      <section className="h-[81px] shrink-0 border border-[#d8d8d8] px-[3px]">
        <h3 className="flex h-[26px] items-center gap-2 pl-[3px] text-sm text-[#005f87]">
          <svg width="9" height="5" viewBox="0 0 9 5" aria-hidden="true"><path d="M0 0h9L4.500 5z" fill="#005f87" /></svg>
          搜索
        </h3>
        <div className="flex items-center gap-1">
          <input aria-label="搜索内容" className="h-[23px] min-w-0 flex-1 border border-[#6e6e6e] outline-none" />
          <ToolBtn label="清除"><Svg w={16} color="#000" sw={1.3}><path d="M2 2l12 12M14 2L2 14" /></Svg></ToolBtn>
          <ToolBtn label="上一个"><Svg w={16}><path d="M8 1.500L14 8h-3v6H5V8H2z" /></Svg></ToolBtn>
          <ToolBtn label="下一个"><Svg w={16}><path d="M8 14.500L14 8h-3V2H5v6H2z" /></Svg></ToolBtn>
          <ToolBtn label="定位结果"><Svg w={16}><circle cx="8" cy="8" r="4" /><path d="M8 1v14M1 8h14" /></Svg></ToolBtn>
        </div>
        <div className="mt-px flex items-center gap-[2px] text-xs">
          <label className="flex flex-1 items-center gap-[5px] pl-px">
            <input type="checkbox" defaultChecked className="h-[13px] w-[13px] accent-[#0a63b8]" />
            自动补全
          </label>
          <ToolBtn label="可见性"><Svg w={18}><ellipse cx="8" cy="7" rx="7" ry="5" /><circle cx="8" cy="6" r="3" fill={K} /><path d="M7.500 6.500h9v10h-9zM9 9h3M9 13h3M13 9h2M13 13h2" fill="#fff" /></Svg></ToolBtn>
          <ToolBtn label="添加过滤"><Svg w={18}><path d="M2 4h6M5 1v6" stroke="#06f" strokeWidth="1.500" /><path d="M7 8h9l-3 4v5l-2-2v-3z" fill="#f5a623" stroke="#d98d12" /></Svg></ToolBtn>
          <span>无匹配</span>
          <ToolBtn label="高亮结果"><Svg w={18}><circle cx="9" cy="9" r="3.500" /><path d="M9 3v12M3 9h12" /><path d="M4 1.500H1.500v15H4M14 1.500h2.500v15H14" stroke={O} strokeWidth="1.300" /></Svg></ToolBtn>
        </div>
      </section>
      <div className="shrink-0 pb-[6px]">
        {['相关性', '细节', '预览'].map((t) => (
          <button type="button" key={t} className="flex h-6 w-full items-center gap-[9px] border-b-2 border-[#d0d0d0] pl-[10px] pt-[2px] text-sm text-[#005f87]">
            <svg width="5" height="8" viewBox="0 0 5 8" aria-hidden="true"><path d="M0 0v8l5-4z" fill="#005f87" /></svg>
            {t}
          </button>
        ))}
      </div>
    </aside>
  );
}

/* ---------- Dialog ---------- */

function Head({ open = true, children }: { open?: boolean; children: ReactNode }) {
  return (
    <h3 className="flex h-6 items-center gap-2 pl-2 text-[13px] font-bold text-[#005f87]">
      <span className="flex w-[7px] justify-center">
        {open ? (
          <svg width="7" height="4" viewBox="0 0 7 4" aria-hidden="true"><path d="M0 0h7L3.500 4z" fill="#005f87" /></svg>
        ) : (
          <svg width="4" height="7" viewBox="0 0 4 7" aria-hidden="true"><path d="M0 0v7l4-3.500z" fill="#005f87" /></svg>
        )}
      </span>
      {children}
    </h3>
  );
}

const BOX = 'rounded-[1px] border border-[#cfcfcf] bg-white';

function ProjectionDialog() {
  return (
    <div role="dialog" aria-label="投影视图" className="absolute left-[351px] top-[106px] z-20 w-[322px] border border-t-0 border-[#cfcfcf] bg-[#efefef] text-xs text-[#1a1a1a]">
      <div className="-mx-px flex h-6 items-center bg-[#005f87] pl-[6px] pr-[9px] text-white">
        <Svg w={16} color="#fff" sw={2}><circle cx="8" cy="8" r="4.500" /><circle cx="8" cy="8" r="0.800" /><path d="M8 1v2M8 13v2M1 8h2M13 8h2M3 3l1.500 1.500M11.500 11.500L13 13M13 3l-1.500 1.500M3 13l1.500-1.500" /></Svg>
        <h2 className="flex-1 pl-[7px] text-sm">投影视图</h2>
        <button type="button" aria-label="重置" className="mr-2"><Svg w={14} color="#fff" sw={1.5}><path d="M9 2c6 2 4 10-2 10C1 12 0 6 3 3M0 4l4-2 1 4" /></Svg></button>
        <button type="button" aria-label="帮助说明" className="mr-[13px] text-base font-bold">?</button>
        <button type="button" aria-label="关闭对话框"><Svg w={12} color="#fff" sw={2}><path d="M1 1l10 10M11 1L1 11" /></Svg></button>
      </div>
      <div className="flex flex-col gap-[2px] px-[5px] pt-[5px]">
        <section className={`${BOX} pb-2`}>
          <Head>父视图</Head>
          <div className="mt-[6px] flex items-center px-2">
            <Check />
            <span className="flex-1 pl-1">选择视图</span>
            <button type="button" aria-label="选择父视图" className="flex h-8 w-8 items-center justify-center border border-[#6e6e6e]">
              <Svg w={24}><path d="M4.500 8.500h18v9h-18z" strokeWidth="1.300" /><circle cx="9" cy="12" r="4" stroke="#e00" strokeWidth="1.300" /><circle cx="14" cy="13" r="2.500" /><path d="M9 3v17M1 12h15" strokeWidth="1.300" /></Svg>
            </button>
          </div>
        </section>
        <section className={`${BOX} pb-2`}>
          <Head>铰链线</Head>
          <div className="mt-[6px] flex items-center px-2">
            <span className="flex-1">矢量选项</span>
            <BoxSelect label="矢量选项" value="已定义" className="h-[25px] w-[138px] p-[2px]" selectClass="w-[115px] border border-dotted border-black bg-[#d9ebef] pl-[2px]" />
          </div>
          <div className="mt-[2px] flex items-center px-2">
            <span className="mr-[2px] flex h-8 flex-1 items-center bg-[#ffe07a]">
              <Svg w={16} color="#f5172f" sw={2}><path d="M8 2v13M2 8.500h12M3 3l10 11M13 3L3 14" /></Svg>
              <span className="pl-1">指定矢量</span>
            </span>
            <ToolBtn label="矢量对话框"><Svg w={18}><path d="M9.500 12V3M7.500 5.500l2-4 2 4z" /><path d="M3 15.500h2M8.500 15.500h2M14 15.500h2" stroke="#000" strokeWidth="2" /></Svg></ToolBtn>
            <span className="ml-[2px] flex h-8 w-[49px] border border-[#f5c030] bg-[#ffe07a]">
              <button type="button" aria-label="自动判断矢量" className="flex w-[31px] items-center justify-center border-r border-[#f5c030]">
                <Svg w={26}><path d="M6.500 26V7M4.500 6l2-4 2 4z" /><path d="M18 7l-7 10h5l-5 9 12-12h-5l5-7z" fill="#f6c526" /></Svg>
              </button>
              <button type="button" aria-label="矢量类型" className="flex flex-1 items-center justify-center"><Caret /></button>
            </span>
          </div>
          <div className="mt-[2px] flex items-center px-2">
            <span className="flex-1">反转投影方向</span>
            <ToolBtn label="反转投影方向"><Svg w={20}><path d="M2 2l16 16M18 2L2 18M13 2h5v5M2 13v5h5" strokeWidth="1.300" /></Svg></ToolBtn>
          </div>
        </section>
        <section className={`${BOX} pb-[7px]`}>
          <Head>视图原点</Head>
          <div className="mt-[6px] flex items-center px-2 text-[#a0a0a0]">
            <Svg w={16} color="#a8a8a8"><path d="M1 2v14" strokeWidth="2" /><path d="M2 3c5-3 7 2 13-1v9c-6 3-8-2-13 1z" fill="#ccc" stroke="none" /><path d="M3 4h3v2H3zM9 4h3v2H9zM6 6h3v2H6zM12 6h3v2h-3zM3 8h3v2H3zM9 8h3v2H9z" fill="#999" stroke="none" /></Svg>
            <span className="flex-1 pl-1">指定位置</span>
            <button type="button" disabled aria-label="指定视图位置" className="flex h-8 w-8 items-center justify-center border border-[#bdbdbd]">
              <Svg w={24} color="#aaa"><path d="M2.500 10.500h18v10h-18z" strokeWidth="1.300" /><circle cx="11" cy="16" r="1.200" fill="#aaa" /><path d="M17 2v12M11 8h12M15 4l2-2 2 2M15 12l2 2 2-2M13 6l-2 2 2 2M21 6l2 2-2 2" strokeWidth="1.300" /></Svg>
            </button>
          </div>
          <div className={`mx-2 mt-1 h-[116px] ${BOX}`}>
            <Head>放置</Head>
            <div className="mt-[6px] flex items-center px-2 text-[#a0a0a0]">
              <span className="flex-1">方法</span>
              <span className="relative flex h-[26px] w-[138px] items-center border border-[#bdbdbd] bg-[#f4f4f4] pl-[2px] text-[#858585]">
                <span className="flex h-5 w-[22px] items-center justify-center bg-white"><Svg w={18} color="#aaa"><path d="M1.500 10.500h6v5h-6zM10.500 2.500h5v4h-5zM5 13l8-9M9 1l8 6M17 1L9 7" /></Svg></span>
                <select disabled aria-label="方法" defaultValue="铰链副" className="h-full flex-1 appearance-none bg-transparent opacity-100 outline-none"><option>铰链副</option></select>
                <svg width="7" height="4" viewBox="0 0 7 4" className="pointer-events-none absolute right-[5px]" aria-hidden="true"><path d="M0 0h7L3.500 4z" fill="#999" /></svg>
              </span>
            </div>
            <div className="mt-[2px] pl-[9px]"><Head open={false}>跟踪</Head></div>
            <label className="mt-[6px] flex items-center gap-1 pl-[9px] text-[#a0a0a0]">
              <input type="checkbox" disabled className="h-[13px] w-[13px]" />
              关联对齐
            </label>
          </div>
          <div className={`mx-2 mt-1 ${BOX}`}><Head open={false}>移动视图</Head></div>
        </section>
        <section className={BOX}><Head open={false}>设置</Head></section>
        <button type="button" aria-label="收起" className="flex h-3 items-center justify-center border-b border-[#cfcfcf]">
          <svg width="9" height="5" viewBox="0 0 9 5" aria-hidden="true"><path d="M0 5h9L4.500 0z" fill="#1a1a1a" /></svg>
        </button>
      </div>
      <div className="flex justify-end pb-[9px] pr-[15px] pt-2">
        <button type="button" className="h-[25px] w-[54px] bg-[#005f87] text-white">关闭</button>
      </div>
    </div>
  );
}

/* ---------- Drawing ---------- */

function Arrow({ x, y, a }: { x: number; y: number; a: number }) {
  return <path d="M0 0l-8 -2v4z" fill="#000" stroke="none" transform={`translate(${x} ${y}) rotate(${a})`} />;
}

function T({ x, y, children, s = 11, r = 0, b = false }: { x: number; y: number; children: ReactNode; s?: number; r?: number; b?: boolean }) {
  return (
    <text x={x} y={y} fontSize={s} fontWeight={b ? 700 : 400} fill="#111" stroke="none" textAnchor="middle" dominantBaseline="central" transform={r ? `rotate(${r} ${x} ${y})` : undefined}>
      {children}
    </text>
  );
}

const HX = [921, 1010, 1100, 1190];
const SIDE: [number, string][] = [[662, '借通用件登记'], [707, '描　图'], [752, '校　描'], [797, '旧底图总号'], [842, '签　字'], [887, '日　期']];
const SIGN: [number, string][] = [[886, '设　计'], [899, '校　对'], [912, '审　核'], [926, '批　准']];

function Drawing() {
  return (
    <svg viewBox="416 204 1504 806" preserveAspectRatio="xMinYMin meet" className="h-full w-full font-['Noto_Sans','Noto_Sans_CJK_SC',sans-serif]" fill="none" stroke="#000" strokeWidth="1" role="img" aria-label="A3 工程图">
      <defs>
        <pattern id="hatch" width="5.3" height="5.3" patternUnits="userSpaceOnUse" patternTransform="rotate(45)">
          <path d="M2.5 0v5.3" stroke="#111" strokeWidth="1" />
        </pattern>
      </defs>

      {/* sheet frame */}
      <path d="M688.5 204V945.500H1797.500V204" />
      <path d="M755 204V932.500H1784.500V204" strokeWidth="1.800" />
      {SIDE.map(([y, t]) => (
        <g key={t}>
          <path d={`M688 ${y + 0.5}H755`} stroke="#555" />
          <path d={`M688 ${y + 19.5}H755`} />
          <T x={722} y={y + 10}>{t}</T>
        </g>
      ))}

      {/* title block */}
      <g strokeWidth="1.500">
        <path d="M1309.500 932V813.500H1784.500M1348.500 813.500V932M1401.500 813.500V932M1468 813.500V932M1626.500 813.500V932M1330.500 813.500V879M1441.500 813.500V879" />
        <path d="M1309.500 866.500H1468M1309.500 879.500H1468M1468 882.500H1784.500M1626.500 847.500H1784.500M1626.500 861H1784.500M1626.500 895H1784.500M1705.500 847.500V895M1745.500 847.500V882M1647.500 861V882M1668.500 861V882M1687.500 861V882" />
      </g>
      <path d="M1309.500 826.500H1468M1309.500 840.500H1468M1309.500 853.500H1468M1309.500 892.500H1468M1309.500 906.500H1468M1309.500 919.500H1468" stroke="#555" />
      <T x={1320} y={873} s={8} b>标记</T><T x={1340} y={873} s={8} b>处数</T><T x={1375} y={873} s={8} b>更改文件号</T><T x={1422} y={873} s={8} b>签　字</T><T x={1455} y={873} s={8} b>日期</T>
      {SIGN.map(([y, t]) => <T key={t} x={1329} y={y - 1} s={8} b>{t}</T>)}
      <T x={1666} y={854} s={8} b>图样标记</T><T x={1725} y={854} s={8} b>重　量</T><T x={1765} y={854} s={8} b>比　例</T>
      <T x={1666} y={888} s={8} b>共　　　页</T><T x={1745} y={888} s={8} b>第　　　页</T>
      <T x={1706} y={913} s={9}>西门子产品管理软件（上海）有限公司</T>

      {/* section view */}
      <path d="M884 402H918L992 273L1009 282L929 420H884z" fill="url(#hatch)" stroke="none" />
      <path d="M1104 337L1216.500 402V420.500H1057z" fill="url(#hatch)" stroke="none" />
      <g strokeWidth="1.800">
        <path d="M884 428.500V403Q884 402 885 402H918L990.500 275Q992 272.500 995 274L1216.500 402V428.500z" />
        <path d="M884 420.500H1216.500M1009 282L929 420.500M1104 337L1057 420.500" />
      </g>
      <path d="M1059.500 304L986 431" strokeDasharray="42 4 6 4" />
      <path d="M1009 282L1019 263M1104 337L1115.500 318M1016 267.500L1113 322" />
      <Arrow x={1016} y={267.5} a={209} /><Arrow x={1113} y={322} a={29} />
      <T x={1071} y={288} r={29} s={12}>Ø 42</T>
      <path d="M1216.500 382V402M1201 404A17 17 0 0 1 1217 387.500H1222L1229 393" />
      <Arrow x={1201} y={406} a={110} /><Arrow x={1217} y={387.5} a={190} />
      <T x={1202} y={383} r={-60} s={10}>60°</T>
      <path d="M840 402H884M840 428.500H884M844.500 402V428.500M870 420.500H884M875.500 411V452" stroke="#333" />
      <Arrow x={844.5} y={402} a={-90} /><Arrow x={844.5} y={428} a={90} /><Arrow x={875.5} y={420} a={90} /><Arrow x={875.5} y={429} a={-90} />
      <T x={838} y={415} r={-90}>10</T><T x={868} y={414} r={-90}>3</T>

      {/* plan view */}
      <g strokeWidth="1.800">
        <rect x="884" y="513" width="332.500" height="251.500" rx="26" />
        <path d="M884 572.500H1216.500M884 704.500H1216.500" />
        <ellipse cx="992.500" cy="638.500" rx="64" ry="55.500" />
        <path d="M1028.500 593Q989 638.500 1028.500 684" />
        {HX.map((x) => (<g key={x}><circle cx={x} cy="539.500" r="13" /><circle cx={x} cy="727" r="13" /></g>))}
      </g>
      {HX.map((x) => (
        <g key={x} stroke="#333">
          <path d={`M${x - 21} 539.5h14m3 0h8m3 0h14M${x - 21} 727.5h14m3 0h8m3 0h14`} />
          <path d={`M${x + 0.5} 518v15m0 3v8m0 3v14M${x + 0.5} 705v16m0 3v8m0 3v13`} />
        </g>
      ))}
      <path d="M871 638.500H1230" strokeDasharray="47 5 8 5" />
      <path d="M773 513H910M773 763.500H910M808 539.500H900M808 727.500H900M844 572.500H884M844 704.500H884" stroke="#444" />
      <path d="M778 513V763M813 540V727M849.500 573V704" />
      {[[778, 513, 763], [813, 540, 727], [849.5, 573, 704]].map(([x, a, b]) => (<g key={x}><Arrow x={x} y={a} a={-90} /><Arrow x={x} y={b} a={90} /></g>))}
      <T x={770} y={638} r={-90}>95</T><T x={805} y={633} r={-90}>71</T><T x={841} y={638} r={-90}>50</T>
      <path d="M921 740V819M1010.500 740V793M1190 740V819M884 738V839M1216.500 738V839" stroke="#333" />
      <path d="M921 789.500H1010M921 813.500H1190M884 834.500H1216" />
      {[[921, 1010, 789.5], [921, 1190, 813.5], [884, 1216, 834.5]].map(([a, b, y]) => (<g key={y}><Arrow x={a} y={y} a={180} /><Arrow x={b} y={y} a={0} /></g>))}
      <T x={966} y={781}>34</T><T x={1056} y={805}>102</T><T x={1051} y={826}>126</T>
      <path d="M862 487.500H904L916 526M1237 508.500H1223L1192 538" />
      <Arrow x={916} y={526} a={72} /><Arrow x={1208} y={523} a={-44} />
      <T x={867} y={479} s={10} b>8x</T><T x={893} y={479}>Ø 10</T><T x={1230} y={502} s={10}>R10</T>

      {/* surface finish note */}
      <T x={1667} y={287}>其余</T>
      <path d="M1678 281.500H1692L1685 293zM1685 293L1702.500 266" />

      {/* drag handles */}
      <g stroke="none" fill="#ff9f3f">
        <path d="M1165 553h6l-2 46h-2zM1165 661h6l-2-46h-2zM1115 604v6l45-2v-2zM1221 604v6l-45-2v-2z" />
      </g>
      <g fill="#6666d0" stroke="#334" strokeWidth="0.800">
        <path d="M1168 535l5 18h-10zM1168 679l5-18h-10zM1096 607l18-5v10zM1240 607l-18-5v10z" />
        <circle cx="1168" cy="607" r="4.500" stroke="none" />
      </g>
      <text x="425" y="1003" fontSize="13" fill="#1a1a1a" stroke="none">"A3_1"</text>
    </svg>
  );
}

function Workspace() {
  return (
    <main className="relative flex min-w-0 flex-1 flex-col">
      <div className="flex h-[26px] shrink-0 items-stretch border-b-2 border-[#005f87] bg-white">
        <div className="flex items-center bg-[#005f87] pl-[5px] pr-[7px] text-xs text-white">
          <Svg w={18} color="#fff" className="mr-[3px]"><path d="M2.500 2.500h12v4h-12zM4.500 6.500v7M8.500 8.500h6v6h-6zM10 2v4" /></Svg>
          <span>基座.prt</span>
          <Svg w={12} color="#fff" sw={1.3} className="ml-[5px] mr-[6px]"><path d="M6 1.500H2v9h7V8M6 1.500L9 4M6 6h5M9 4l2 2-2 2" /></Svg>
          <button type="button" aria-label="关闭标签"><Svg w={9} color="#fff" sw={1.3}><path d="M1 1l7 7M8 1L1 8" /></Svg></button>
        </div>
      </div>
      <div className="min-h-0 flex-1 overflow-hidden bg-[#cccccc]"><Drawing /></div>
      <div className="absolute left-[715px] top-8 flex h-[33px] w-[74px] items-center bg-white shadow-sm">
        <Svg w={24} className="ml-3" color="#444"><circle cx="12" cy="12" r="9.500" strokeWidth="1.300" /><path d="M12 1v7M12 16v7M1 12h7M16 12h7M10 6l2 2 2-2M10 18l2-2 2 2M6 10l2 2-2 2M18 10l-2 2 2 2" strokeWidth="1.300" /><path d="M12 10l2 2-2 2-2-2z" fill={O} stroke={O} strokeWidth="2" /></Svg>
        <Caret className="ml-[6px]" />
        <span className="ml-[11px] h-[26px] w-px bg-[#d8d8d8]" />
        <Caret className="ml-1 mt-[14px]" />
      </div>
    </main>
  );
}

function ImeBar() {
  return (
    <div className="absolute bottom-0 right-0 z-20 flex h-[26px] items-center border-t border-[#b8d4ee] bg-white text-[#0a6fd8]">
      <Svg w={32} h={30} className="-mt-1" color="none">
        <path d="M2 6C9 3 16 2 23 0c3 7 6 15 7 25-7 3-14 4-21 5C5 22 3 14 2 6z" fill="#f4511e" />
        <path d="M23 7c-4-3-13-1-13 4 0 6 13 3 13 8 0 5-9 6-13 2" stroke="#fff" strokeWidth="4" />
      </Svg>
      <span className="ml-[5px] text-base font-bold leading-none">中</span>
      <Svg w={16} className="ml-[10px]" color="#0a6fd8" sw={1.8}><circle cx="5" cy="6" r="2" /><path d="M12 8v3l-2 3" strokeWidth="2.500" /></Svg>
      <Svg w={16} h={18} className="ml-[6px]" color="#0a6fd8" sw={2}><rect x="5.500" y="1" width="5" height="9" rx="2.500" fill="#0a6fd8" /><path d="M2.500 8c0 7 11 7 11 0M8 13v4" /></Svg>
      <Svg w={16} className="ml-[8px]" color="#0a6fd8" sw={1.8}><rect x="1" y="2" width="14" height="12" rx="1" /><path d="M3 5.500h10M3 8.500h10" strokeDasharray="2 2" /><path d="M4 11.500h8" /></Svg>
      <Svg w={18} className="ml-[8px]" color="none"><path d="M1 4l4-2c1 2 4 2 5 0l5 2v4h-2v8H4V8H1z" fill="#a77bf3" /><path d="M1 4l4-2c1 2 4 2 5 0l5 2v4H1z" fill="#e78fb0" /><circle cx="15.500" cy="3" r="2.500" fill="#f4513a" /></Svg>
      <Svg w={16} className="ml-[6px]" color="#0a6fd8" sw={2}><rect x="1" y="1" width="6" height="6" rx="1.500" fill="#0a6fd8" /><circle cx="12" cy="4" r="2.800" /><rect x="1" y="9" width="6" height="6" rx="1.500" fill="#0a6fd8" /><rect x="9" y="9" width="6" height="6" rx="1.500" fill="#0a6fd8" /></Svg>
      <Svg w={22} className="ml-[6px] mr-[2px]" color="none"><circle cx="10" cy="11" r="10" fill="#f1e9e4" /><path d="M3 10l12-4 1 5-12 3z" fill="#c9602b" /><path d="M7 11h3v3H7zM12 10h3v2h-3z" fill="#222" /><path d="M19 3l1 3 2 1-2 1-1 3-1-3-2-1 2-1z" fill="#ffd23f" /></Svg>
    </div>
  );
}

export default function App() {
  return (
    <div className="relative flex h-screen flex-col overflow-hidden bg-white font-['Noto_Sans','Noto_Sans_CJK_SC',sans-serif]">
      <header className="bg-linear-to-r from-[#00658b] to-[#067ba6]">
        <TitleBar />
        <MenuBar />
      </header>
      <Ribbon />
      <SelectionBar />
      <div className="relative flex min-h-0 flex-1">
        <ResourceStrip />
        <Navigator />
        <Workspace />
        <ProjectionDialog />
        <Marker n={2} className="left-[462px] top-[105px]" />
        <Marker n={3} className="left-[1134px] top-[106px]" />
        <Marker n={4} className="left-[589px] top-[238px]" />
      </div>
      <footer className="flex h-[22px] shrink-0 items-center border-t border-[#a0a0a0] bg-white pl-[3px] text-[11px] font-medium text-black">选择对象以自动判断矢量</footer>
      <Marker n={1} className="left-[171px] top-[67px]" />
      <ImeBar />
      <p className="pointer-events-none absolute bottom-2 right-1 z-30 whitespace-nowrap font-['Noto_Sans_CJK_SC',sans-serif] text-[38px] font-light leading-[54px] text-white/60 [text-shadow:1px_1px_1px_rgba(90,90,90,0.8)]">CSDN @清音菩提—寻寻</p>
    </div>
  );
}
